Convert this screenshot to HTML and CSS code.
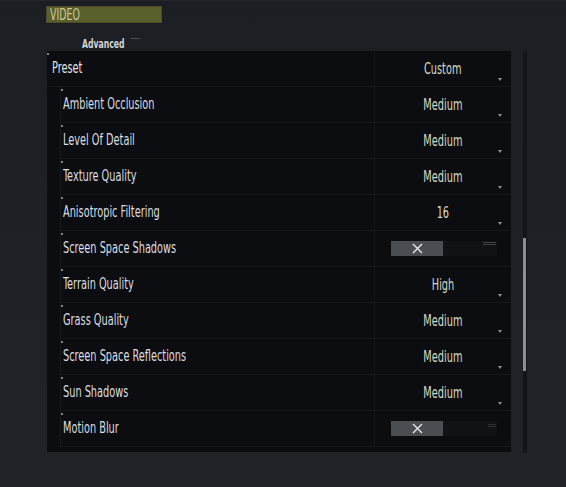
FILE: index.html
```html
<!DOCTYPE html>
<html lang="en">
<head>
    <meta charset="UTF-8">
    <title>Video Settings</title>
    <link rel="stylesheet" href="styles.css">
</head>
<body>
    <div class="tabs">
        <div class="tab active"><span class="txt">VIDEO</span></div>
    </div>
    <div class="section-title"><span class="txt">Advanced</span><span class="title-tick"></span></div>

    <div class="settings">
        <div class="list">
            <div class="row preset">
                <div class="label"><span class="txt">Preset</span></div>
                <div class="value"><span class="txt">Custom</span><span class="arrow"></span></div>
            </div>
            <div class="sub">
                <div class="row">
                    <div class="label"><span class="txt">Ambient Occlusion</span></div>
                    <div class="value"><span class="txt">Medium</span><span class="arrow"></span></div>
                </div>
                <div class="row">
                    <div class="label"><span class="txt">Level Of Detail</span></div>
                    <div class="value"><span class="txt">Medium</span><span class="arrow"></span></div>
                </div>
                <div class="row">
                    <div class="label"><span class="txt">Texture Quality</span></div>
                    <div class="value"><span class="txt">Medium</span><span class="arrow"></span></div>
                </div>
                <div class="row">
                    <div class="label"><span class="txt">Anisotropic Filtering</span></div>
                    <div class="value"><span class="txt">16</span><span class="arrow"></span></div>
                </div>
                <div class="row">
                    <div class="label"><span class="txt">Screen Space Shadows</span></div>
                    <div class="value">
                        <div class="toggle">
                            <span class="toggle-off">
                                <svg width="11" height="11" viewBox="0 0 11 11"><path d="M1 1L10 10M10 1L1 10" stroke="#e6e8ea" stroke-width="1.4"/></svg>
                            </span>
                            <span class="toggle-on"><i></i><i></i></span>
                        </div>
                    </div>
                </div>
                <div class="row">
                    <div class="label"><span class="txt">Terrain Quality</span></div>
                    <div class="value"><span class="txt">High</span><span class="arrow"></span></div>
                </div>
                <div class="row">
                    <div class="label"><span class="txt">Grass Quality</span></div>
                    <div class="value"><span class="txt">Medium</span><span class="arrow"></span></div>
                </div>
                <div class="row">
                    <div class="label"><span class="txt">Screen Space Reflections</span></div>
                    <div class="value"><span class="txt">Medium</span><span class="arrow"></span></div>
                </div>
                <div class="row">
                    <div class="label"><span class="txt">Sun Shadows</span></div>
                    <div class="value"><span class="txt">Medium</span><span class="arrow"></span></div>
                </div>
                <div class="row">
                    <div class="label"><span class="txt">Motion Blur</span></div>
                    <div class="value">
                        <div class="toggle">
                            <span class="toggle-off">
                                <svg width="11" height="11" viewBox="0 0 11 11"><path d="M1 1L10 10M10 1L1 10" stroke="#e6e8ea" stroke-width="1.4"/></svg>
                            </span>
                            <span class="toggle-on faint"><i></i><i></i></span>
                        </div>
                    </div>
                </div>
            </div>
        </div>
        <div class="scrollbar">
            <div class="thumb"></div>
        </div>
    </div>
</body>
</html>
```

FILE: styles.css
```css
body {
    margin: 0;
    height: 487px;
    overflow: hidden;
    font-family: "DejaVu Sans Condensed", "DejaVu Sans", sans-serif;
    color: #d4d6d8;
    background: linear-gradient(180deg, #1b1e23 0%, #1e2125 60%, #1f2226 100%);
}

/* condensed look of the game font */
.txt {
    display: inline-block;
    white-space: nowrap;
    transform: scaleX(0.7);
    transform-origin: left center;
}

.tabs {
    display: flex;
    padding: 5px 0 0 46px;
    border-top: 1px solid #23272c;
}

.tab {
    width: 116px;
    height: 17px;
    padding-left: 3px;
    font-size: 15px;
    line-height: 16px;
    color: #c6ca9c;
    background: #5b5f2b;
    border: 1px solid #4a4d25;
    box-sizing: border-box;
}

.section-title {
    display: flex;
    align-items: flex-start;
    margin: 15px 0 0 82px;
    height: 13px;
    font-size: 13px;
    font-weight: bold;
    line-height: 12px;
    color: #d0d3d6;
}

.section-title .txt {
    transform: scaleX(0.66);
}

.title-tick {
    width: 9px;
    height: 1px;
    margin-left: -16px;
    background: #4a4e55;
}

.settings {
    display: flex;
    height: 402px;
}

.list {
    width: 464px;
    margin-left: 47px;
    height: 401px;
    background: #0b0d10;
}

.sub {
    margin-left: 13px;
    border-left: 1px solid #16191d;
}

.row {
    position: relative;
    display: flex;
    height: 36px;
    border-bottom: 1px solid #15181c;
    box-sizing: border-box;
}

.row::before {
    content: '';
    position: absolute;
    left: 0;
    top: 2px;
    width: 2px;
    height: 2px;
    background: #7d838b;
}

.label {
    flex: 1;
    padding-left: 2px;
    font-size: 15.5px;
    line-height: 35px;
    color: #dcdee0;
    border-right: 1px solid #14171a;
}

.preset .label {
    padding-left: 5px;
    color: #e2e4e6;
}

.value {
    position: relative;
    width: 136px;
    display: flex;
    justify-content: center;
    align-items: center;
    font-size: 15.5px;
    color: #d8dac6;
}

.value .txt {
    transform-origin: center center;
}

.arrow {
    position: absolute;
    right: 9px;
    bottom: 5px;
    width: 0;
    height: 0;
    border-left: 2px solid transparent;
    border-right: 2px solid transparent;
    border-top: 3px solid #8d9096;
}

.toggle {
    display: flex;
    width: 106px;
    height: 15px;
    margin-left: 2px;
}

.toggle-off {
    width: 52px;
    display: flex;
    justify-content: center;
    align-items: center;
    background: #4a4d51;
}

.toggle-on {
    flex: 1;
    display: flex;
    flex-direction: column;
    align-items: flex-end;
    gap: 1px;
    padding: 1px 1px 0 0;
    background: #101316;
}

.toggle-on i {
    display: block;
    width: 13px;
    height: 1px;
    background: #3e4248;
}

.toggle-on.faint {
    padding-top: 3px;
}

.toggle-on.faint i {
    width: 8px;
    background: #2c3035;
}

.scrollbar {
    width: 4px;
    margin-left: 12px;
    background: #121518;
    display: flex;
    flex-direction: column;
}

.thumb {
    width: 3px;
    height: 133px;
    margin-top: 187px;
    background: #8b8e92;
}
```
